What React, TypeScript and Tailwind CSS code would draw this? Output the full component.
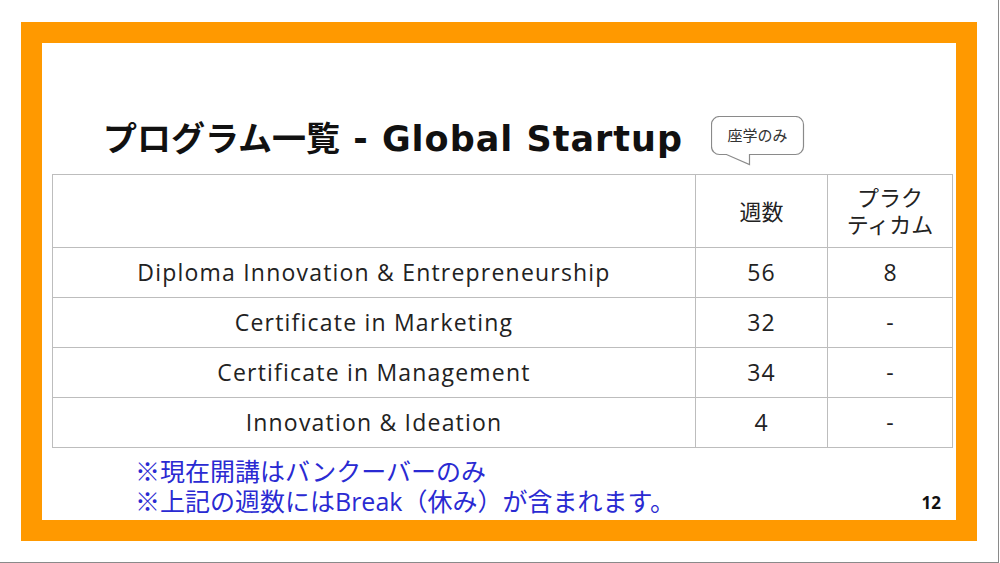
import React from "react";

const jp = { fontFamily: '"Open Sans", "Noto Sans CJK JP", sans-serif' };
const titleFont = { fontFamily: '"Open Sans", "Noto Sans CJK JP", sans-serif' };
const latinBold = { fontFamily: '"DejaVu Sans", "Open Sans", sans-serif' };

function Bubble() {
  return (
    <div className="relative w-[94px] h-[50px] shrink-0">
      <svg width="94" height="50" viewBox="0 0 94 50" className="absolute inset-0">
        <path
          d="M8.5 0.5 H84.5 A8 8 0 0 1 92.5 8.5 V30.5 A8 8 0 0 1 84.5 38.5 H38.5 V48.5 L15.5 38.5 H8.5 A8 8 0 0 1 0.5 30.5 V8.5 A8 8 0 0 1 8.5 0.5 Z"
          fill="white"
          stroke="#8a8a8a"
          strokeWidth="1.2"
        />
      </svg>
      <div
        className="relative h-[39px] w-[93px] flex items-center justify-center text-[15px] text-[#333]"
        style={jp}
      >
        座学のみ
      </div>
    </div>
  );
}

const rows = [
  ["Diploma Innovation & Entrepreneurship", "56", "8"],
  ["Certificate in Marketing", "32", "-"],
  ["Certificate in Management", "34", "-"],
  ["Innovation & Ideation", "4", "-"],
];

export default function App() {
  return (
    <div className="w-[999px] h-[563px] bg-white border-r border-b border-[#8a8a8a] overflow-hidden">
      <div className="ml-[21px] mt-[22px] w-[956px] h-[519px] border-[21px] border-[#ff9900] bg-white flex flex-col pl-[10px]">
        <div className="h-[58px] mt-[73px] flex items-start">
          <div
            className="w-[659px] pl-[51px] text-[34px] leading-[44px] font-bold text-[#111] whitespace-nowrap"
            style={titleFont}
          >
            プログラム一覧
            <span className="text-[35px] tracking-[1px]" style={latinBold}> - Global Startup</span>
          </div>
          <Bubble />
        </div>
        <table className="w-[900px] border-collapse table-fixed text-[#222]" style={jp}>
          <colgroup>
            <col className="w-[643px]" />
            <col className="w-[132px]" />
            <col className="w-[125px]" />
          </colgroup>
          <tbody>
            <tr className="h-[73px]">
              <td className="border border-[#bdbdbd]"></td>
              <td className="border border-[#bdbdbd] text-center text-[22px]">週数</td>
              <td className="border border-[#bdbdbd] text-center text-[22px] leading-[27px]">
                <div>プラク</div>
                <div>ティカム</div>
              </td>
            </tr>
            {rows.map((r) => (
              <tr key={r[0]} className="h-[50px]">
                <td className="border border-[#bdbdbd] text-center text-[23px] tracking-[1.2px]">{r[0]}</td>
                <td className="border border-[#bdbdbd] text-center text-[23px] tracking-[1px]">{r[1]}</td>
                <td className="border border-[#bdbdbd] text-center text-[23px]">{r[2]}</td>
              </tr>
            ))}
          </tbody>
        </table>
        <div className="w-[900px] mt-[8px] flex items-end justify-between">
          <div className="pl-[83px] text-[25px] leading-[30px] text-[#2a2ad2]" style={jp}>
            <div>※現在開講はバンクーバーのみ</div>
            <div>※上記の週数にはBreak（休み）が含まれます。</div>
          </div>
          <div className="pr-[11px] pb-[1px] text-[17px] font-bold text-[#111]" style={titleFont}>
            12
          </div>
        </div>
      </div>
    </div>
  );
}
